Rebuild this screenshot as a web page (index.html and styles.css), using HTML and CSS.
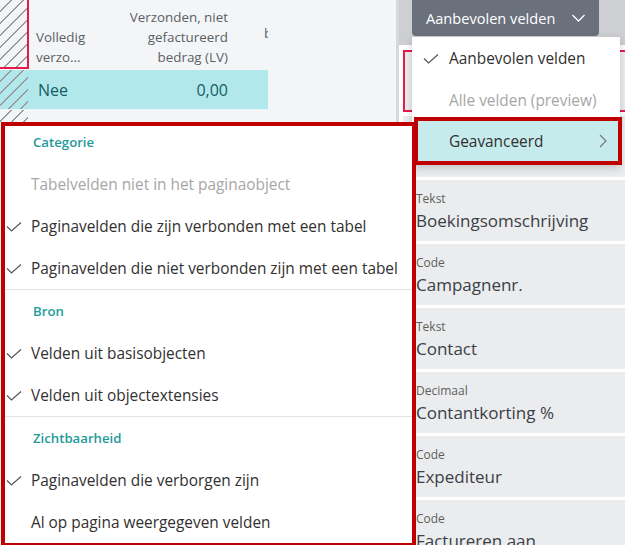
FILE: index.html
```html
<!DOCTYPE html>
<html lang="nl">
<head>
<meta charset="utf-8">
<title>Velden</title>
<link rel="stylesheet" href="styles.css">
</head>
<body>
<div class="page">
  <section class="list-area">
    <div class="grid">
      <div class="grid-head">
        <div class="cell hatch head-marker"></div>
        <div class="cell col-flag">Volledig<br>verzo...</div>
        <div class="cell col-amount"><span>Verzonden, niet</span><span>gefactureerd</span><span>bedrag (LV)</span></div>
        <div class="cell col-next"><span>bedrag</span></div>
      </div>
      <div class="grid-row selected">
        <div class="cell hatch"></div>
        <div class="cell col-flag">Nee</div>
        <div class="cell col-amount">0,00</div>
        <div class="cell col-next"></div>
      </div>
      <div class="grid-row plain">
        <div class="cell hatch"></div>
      </div>
    </div>
  </section>

  <aside class="field-panel">
    <div class="panel-head">
      <button class="view-btn">Aanbevolen velden
        <svg class="chev-down" width="16" height="10" viewBox="0 0 16 10"><polyline points="1.5,2 7.5,8 13.5,2" fill="none" stroke="#fff" stroke-width="1.3"/></svg>
      </button>
    </div>
    <div class="field-list">
      <div class="field-card highlighted"><div class="field-type">Code</div><div class="field-name">Nr.</div></div>
      <div class="field-card"><div class="field-type">Tekst</div><div class="field-name">Naam</div></div>
      <div class="field-card"><div class="field-type">Tekst</div><div class="field-name">Boekingsomschrijving</div></div>
      <div class="field-card"><div class="field-type">Code</div><div class="field-name">Campagnenr.</div></div>
      <div class="field-card"><div class="field-type">Tekst</div><div class="field-name">Contact</div></div>
      <div class="field-card"><div class="field-type">Decimaal</div><div class="field-name">Contantkorting %</div></div>
      <div class="field-card"><div class="field-type">Code</div><div class="field-name">Expediteur</div></div>
      <div class="field-card"><div class="field-type">Code</div><div class="field-name">Factureren aan</div></div>
    </div>
  </aside>
</div>

<div class="menu">
  <div class="menu-item">
    <svg class="check" width="16" height="10" viewBox="0 0 16 10"><polyline points="1,4.5 5.5,9 15,0.5" fill="none" stroke="#555" stroke-width="1.2"/></svg>
    <span>Aanbevolen velden</span>
  </div>
  <div class="menu-item disabled second"><span>Alle velden (preview)</span></div>
  <div class="menu-item active">
    <span>Geavanceerd</span>
    <svg class="chev-right" width="10" height="14" viewBox="0 0 10 14"><polyline points="2,1 8,7 2,13" fill="none" stroke="#777" stroke-width="1.2"/></svg>
  </div>
</div>

<div class="submenu">
  <div class="group">
    <div class="group-title first">Categorie</div>
    <div class="sub-item disabled"><span>Tabelvelden niet in het paginaobject</span></div>
    <div class="sub-item"><svg class="check" width="16" height="10" viewBox="0 0 16 10"><polyline points="1,4.5 5.5,9 15,0.5" fill="none" stroke="#555" stroke-width="1.2"/></svg><span>Paginavelden die zijn verbonden met een tabel</span></div>
    <div class="sub-item"><svg class="check" width="16" height="10" viewBox="0 0 16 10"><polyline points="1,4.5 5.5,9 15,0.5" fill="none" stroke="#555" stroke-width="1.2"/></svg><span>Paginavelden die niet verbonden zijn met een tabel</span></div>
  </div>
  <div class="group">
    <div class="group-title">Bron</div>
    <div class="sub-item"><svg class="check" width="16" height="10" viewBox="0 0 16 10"><polyline points="1,4.5 5.5,9 15,0.5" fill="none" stroke="#555" stroke-width="1.2"/></svg><span>Velden uit basisobjecten</span></div>
    <div class="sub-item"><svg class="check" width="16" height="10" viewBox="0 0 16 10"><polyline points="1,4.5 5.5,9 15,0.5" fill="none" stroke="#555" stroke-width="1.2"/></svg><span>Velden uit objectextensies</span></div>
  </div>
  <div class="group">
    <div class="group-title">Zichtbaarheid</div>
    <div class="sub-item"><svg class="check" width="16" height="10" viewBox="0 0 16 10"><polyline points="1,4.5 5.5,9 15,0.5" fill="none" stroke="#555" stroke-width="1.2"/></svg><span>Paginavelden die verborgen zijn</span></div>
    <div class="sub-item"><span>Al op pagina weergegeven velden</span></div>
  </div>
</div>
</body>
</html>
```

FILE: styles.css
```css
* { box-sizing: border-box; }

html, body {
  margin: 0;
  padding: 0;
  width: 625px;
  height: 545px;
  overflow: hidden;
  font-family: "Open Sans", "Noto Sans", sans-serif;
  color: #323130;
}

.page {
  display: flex;
  width: 625px;
  height: 545px;
}

/* ---------- left list ---------- */
.list-area {
  width: 396px;
  flex: none;
  background: #f4f5f7;
}

.grid {
  width: 268px;
}

.grid-head, .grid-row {
  display: flex;
}

.grid-head {
  height: 70px;
  font-size: 13.4px;
  line-height: 20px;
  color: #5a5f66;
}

.grid-row.selected {
  height: 40px;
  background: #b2e8ec;
  border-bottom: 1px solid #e6f6f7;
  font-size: 16px;
  color: #155e63;
  align-items: center;
}

.grid-row.plain {
  height: 12px;
}

.cell {
  flex: none;
}

.hatch {
  width: 28px;
  align-self: stretch;
  background-image: repeating-linear-gradient(135deg, transparent 0 7.5px, #9a9a9a 7.5px 8.5px);
}

.head-marker {
  width: 29px;
  height: 69px;
  border-right: 2px solid #e8194b;
  border-bottom: 2px solid #e8194b;
}

.grid-head .col-flag {
  width: 101px;
  padding: 27px 0 0 7px;
  white-space: nowrap;
}

.grid-row .col-flag {
  width: 102px;
  padding-left: 10px;
}

.col-amount {
  width: 98px;
  text-align: right;
  white-space: nowrap;
}

.grid-head .col-amount {
  display: flex;
  flex-direction: column;
  align-items: flex-end;
  padding-top: 7px;
}

.col-next {
  width: 40px;
}

.col-next span {
  display: block;
  width: 4px;
  margin: 23px 0 0 36px;
  overflow: hidden;
  color: #4d6b8a;
}

/* ---------- right panel ---------- */
.field-panel {
  flex: 1;
  background: #ffffff;
  border-left: 3px solid #d6d8db;
  overflow: hidden;
}

.panel-head {
  height: 45px;
  background: #cdcfd3;
  padding-left: 13px;
}

.view-btn {
  display: flex;
  align-items: center;
  gap: 16px;
  width: 187px;
  height: 36px;
  padding: 0 0 0 14px;
  border: none;
  border-radius: 0 0 4px 4px;
  background: #6a717c;
  color: #ffffff;
  font-family: inherit;
  font-size: 14.6px;
  white-space: nowrap;
}

.field-list {
  padding: 5px 0 0 4px;
  width: 240px;
}

.field-card {
  height: 61px;
  margin-bottom: 3px;
  background: #ebecee;
  padding: 10px 0 0 13px;
  white-space: nowrap;
}

.field-card.highlighted {
  height: 62px;
  margin-bottom: 4px;
  border: 2px solid #e8194b;
  padding: 8px 0 0 11px;
}

.field-type {
  font-size: 12px;
  line-height: 18px;
  color: #605e5c;
}

.field-name {
  margin-top: 2px;
  font-size: 17px;
  line-height: 22px;
  color: #3b3f47;
}

/* ---------- dropdown menu ---------- */
.menu {
  position: absolute;
  left: 412px;
  top: 37px;
  width: 208px;
  background: #ffffff;
  box-shadow: 0 3px 8px rgba(0, 0, 0, 0.18);
  font-size: 15.4px;
}

.menu-item {
  display: flex;
  align-items: center;
  height: 42px;
  padding-left: 37px;
  position: relative;
  white-space: nowrap;
}

.menu-item .check {
  position: absolute;
  left: 11px;
  top: 17px;
}

.menu-item.second {
  height: 38px;
  padding-top: 4px;
}

.menu-item.disabled {
  color: #a7a6a5;
}

.menu-item.active {
  height: 48px;
  margin: 0 -2px 0 2px;
  padding-left: 31px;
  padding-right: 10px;
  background: #c5ebec;
  border: 4px solid #c00000;
  justify-content: space-between;
}

/* ---------- submenu ---------- */
.submenu {
  position: absolute;
  left: 1px;
  top: 122px;
  width: 415px;
  height: 425px;
  background: #ffffff;
  border: 4px solid #c00000;
  font-size: 15.4px;
}

.group + .group {
  border-top: 1px solid #e4e4e4;
}

.group-title {
  height: 42px;
  padding: 12px 0 0 28px;
  font-weight: 600;
  font-size: 13.2px;
  color: #1f9a9a;
}

.group-title.first {
  height: 37px;
  padding-top: 7px;
}

.sub-item {
  display: flex;
  align-items: center;
  height: 42px;
  padding-left: 26px;
  position: relative;
  white-space: nowrap;
}

.sub-item .check {
  position: absolute;
  left: 1px;
  top: 17px;
}

.sub-item.disabled {
  color: #a7a6a5;
}
```
